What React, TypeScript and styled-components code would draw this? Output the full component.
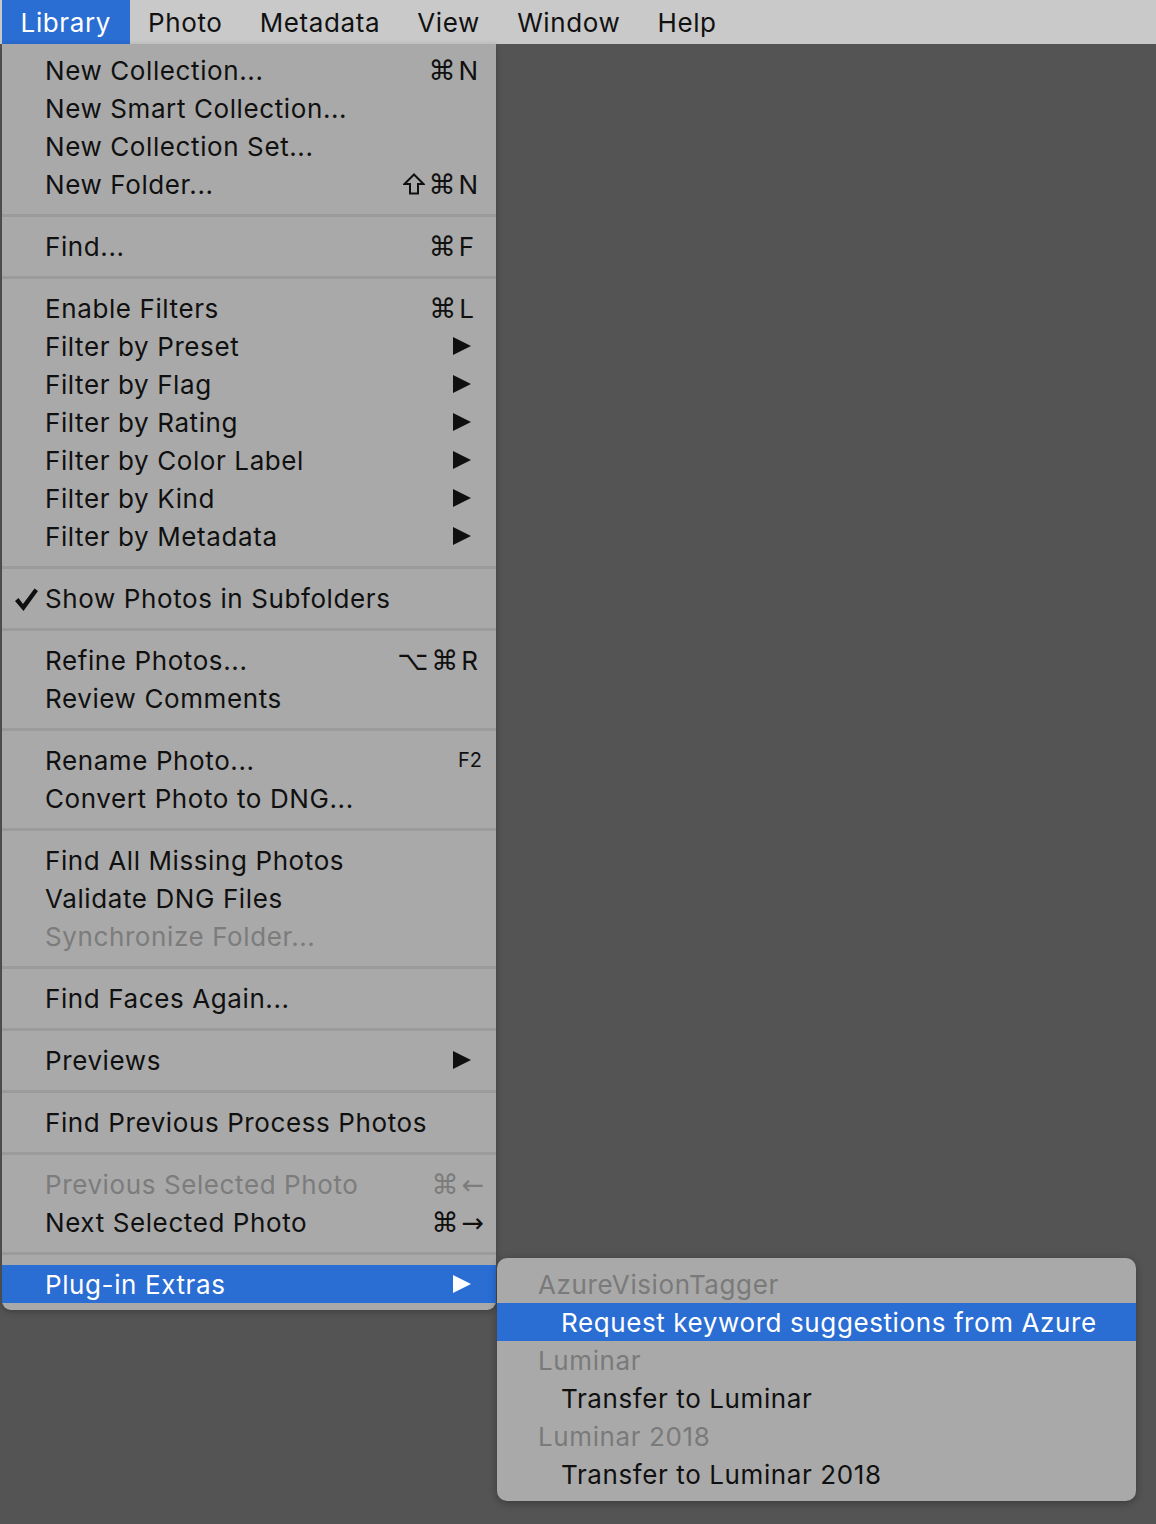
import React from "react";
import styled, { createGlobalStyle } from "styled-components";

const Global = createGlobalStyle`
  html, body { margin: 0; padding: 0; background: #545454; }
  body { font-family: Inter, "DejaVu Sans", sans-serif; -webkit-font-smoothing: antialiased; }
`;

const Page = styled.div`
  width: 1156px;
  height: 1524px;
  background: #545454;
  display: flex;
  flex-direction: column;
  overflow: hidden;
`;

const MenuBar = styled.div`
  height: 44px;
  background: #c9c9c9;
  display: flex;
  align-items: stretch;
  padding-left: 2px;
  flex-shrink: 0;
`;

const BarItem = styled.div<{ $active?: boolean }>`
  display: flex;
  align-items: center;
  padding: 0 18.6px;
  font-size: 26px;
  letter-spacing: 0.6px;
  color: ${(p) => (p.$active ? "#ffffff" : "#111111")};
  background: ${(p) => (p.$active ? "#2a6dd3" : "transparent")};
`;

const Desktop = styled.div`
  flex: 1;
  padding-left: 2px;
`;

const Menu = styled.div`
  width: 494px;
  background: #a9a9a9;
  padding: 7px 0 7px;
  border-radius: 0 0 9px 9px;
  box-shadow: 0 2px 6px rgba(0, 0, 0, 0.25);
`;

const Row = styled.div<{ $highlight?: boolean; $disabled?: boolean }>`
  position: relative;
  height: 38px;
  display: flex;
  align-items: center;
  padding: 0 18px 0 43px;
  font-size: 26px;
  letter-spacing: 0.6px;
  color: ${(p) => (p.$highlight ? "#ffffff" : p.$disabled ? "#7c7c7c" : "#101010")};
  background: ${(p) => (p.$highlight ? "#2a6dd3" : "transparent")};
  white-space: nowrap;
`;

const Label = styled.span`
  flex: 1;
`;

const Shortcut = styled.span<{ $small?: boolean; $nudge?: number }>`
  font-size: ${(p) => (p.$small ? "20px" : "26px")};
  letter-spacing: 0;
  margin-right: ${(p) => (p.$nudge ? `${p.$nudge}px` : "0")};
  display: flex;
  align-items: center;
  gap: 3px;
`;

const Glyph = styled.span`
  font-family: "DejaVu Sans", sans-serif;
  font-size: 27px;
`;

const IconWrap = styled.span`
  display: flex;
`;

const ArrowWrap = styled.span`
  display: flex;
  margin-right: 7px;
`;

const CheckWrap = styled.span`
  position: absolute;
  left: 11px;
  top: 8px;
  display: flex;
`;

const Separator = styled.div`
  height: 24px;
  display: flex;
  align-items: center;
  &::after {
    content: "";
    display: block;
    width: 100%;
    height: 3px;
    background: #9b9b9b;
  }
`;

const SubMenu = styled.div`
  position: absolute;
  left: calc(100% + 1px);
  top: -7px;
  width: 639px;
  background: #a9a9a9;
  border-radius: 10px;
  padding: 7px 0 8px;
  box-shadow: 0 2px 8px rgba(0, 0, 0, 0.3);
`;

const SubRow = styled.div<{ $highlight?: boolean; $header?: boolean }>`
  height: 38px;
  display: flex;
  align-items: center;
  padding-left: ${(p) => (p.$header ? "41px" : "64px")};
  font-size: 26px;
  letter-spacing: 0.6px;
  color: ${(p) => (p.$highlight ? "#ffffff" : p.$header ? "#7a7a7a" : "#101010")};
  background: ${(p) => (p.$highlight ? "#2a6dd3" : "transparent")};
  white-space: nowrap;
`;

const Arrow = ({ color }: { color: string }) => (
  <ArrowWrap>
    <svg width="18" height="20" viewBox="0 0 18 20">
      <polygon points="0,1 18,10 0,19" fill={color} />
    </svg>
  </ArrowWrap>
);

const Check = () => (
  <CheckWrap>
    <svg width="26" height="26" viewBox="0 0 26 26">
      <path d="M2 14 L5.5 11 L10 17 L21.5 1.5 L25 4 L10.5 24 Z" fill="#101010" />
    </svg>
  </CheckWrap>
);

const Shift = () => (
  <IconWrap>
    <svg width="22" height="22" viewBox="0 0 22 22">
      <polygon
        points="11,1.5 20.5,11 15,11 15,20.5 7,20.5 7,11 1.5,11"
        fill="none"
        stroke="#101010"
        strokeWidth="2"
        strokeLinejoin="miter"
      />
    </svg>
  </IconWrap>
);

type Item =
  | { sep: true }
  | {
      sep?: false;
      label: string;
      shortcut?: React.ReactNode;
      small?: boolean;
      nudge?: number;
      arrow?: boolean;
      check?: boolean;
      disabled?: boolean;
      highlight?: boolean;
      sub?: boolean;
    };

const cmd = <Glyph>⌘</Glyph>;

const items: Item[] = [
  { label: "New Collection...", shortcut: <>{cmd}N</> },
  { label: "New Smart Collection..." },
  { label: "New Collection Set..." },
  { label: "New Folder...", shortcut: <><Shift />{cmd}N</> },
  { sep: true },
  { label: "Find...", shortcut: <>{cmd}F</>, nudge: 4 },
  { sep: true },
  { label: "Enable Filters", shortcut: <>{cmd}L</>, nudge: 4 },
  { label: "Filter by Preset", arrow: true },
  { label: "Filter by Flag", arrow: true },
  { label: "Filter by Rating", arrow: true },
  { label: "Filter by Color Label", arrow: true },
  { label: "Filter by Kind", arrow: true },
  { label: "Filter by Metadata", arrow: true },
  { sep: true },
  { label: "Show Photos in Subfolders", check: true },
  { sep: true },
  { label: "Refine Photos...", shortcut: <><Glyph>⌥</Glyph>{cmd}R</> },
  { label: "Review Comments" },
  { sep: true },
  { label: "Rename Photo...", shortcut: "F2", small: true, nudge: -4 },
  { label: "Convert Photo to DNG..." },
  { sep: true },
  { label: "Find All Missing Photos" },
  { label: "Validate DNG Files" },
  { label: "Synchronize Folder...", disabled: true },
  { sep: true },
  { label: "Find Faces Again..." },
  { sep: true },
  { label: "Previews", arrow: true },
  { sep: true },
  { label: "Find Previous Process Photos" },
  { sep: true },
  { label: "Previous Selected Photo", shortcut: <>{cmd}<Glyph>←</Glyph></>, disabled: true, nudge: -6 },
  { label: "Next Selected Photo", shortcut: <>{cmd}<Glyph>→</Glyph></>, nudge: -6 },
  { sep: true },
  { label: "Plug-in Extras", arrow: true, highlight: true, sub: true },
];

const subItems = [
  { label: "AzureVisionTagger", header: true },
  { label: "Request keyword suggestions from Azure", highlight: true },
  { label: "Luminar", header: true },
  { label: "Transfer to Luminar" },
  { label: "Luminar 2018", header: true },
  { label: "Transfer to Luminar 2018" },
];

export default function App() {
  return (
    <Page>
      <Global />
      <MenuBar>
        <BarItem $active>Library</BarItem>
        <BarItem>Photo</BarItem>
        <BarItem>Metadata</BarItem>
        <BarItem>View</BarItem>
        <BarItem>Window</BarItem>
        <BarItem>Help</BarItem>
      </MenuBar>
      <Desktop>
        <Menu>
          {items.map((it, i) =>
            it.sep ? (
              <Separator key={i} />
            ) : (
              <Row key={i} $highlight={it.highlight} $disabled={it.disabled}>
                {it.check && <Check />}
                <Label>{it.label}</Label>
                {it.shortcut && (
                  <Shortcut $small={it.small} $nudge={it.nudge}>
                    {it.shortcut}
                  </Shortcut>
                )}
                {it.arrow && <Arrow color={it.highlight ? "#ffffff" : "#101010"} />}
                {it.sub && (
                  <SubMenu>
                    {subItems.map((s, j) => (
                      <SubRow key={j} $header={s.header} $highlight={s.highlight}>
                        {s.label}
                      </SubRow>
                    ))}
                  </SubMenu>
                )}
              </Row>
            )
          )}
        </Menu>
      </Desktop>
    </Page>
  );
}
